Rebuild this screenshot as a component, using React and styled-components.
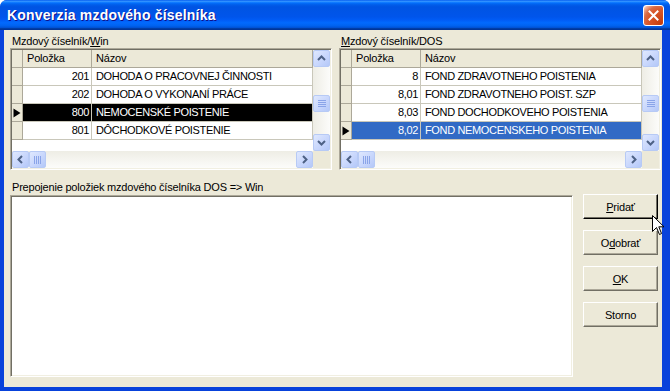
import React from 'react';
import styled, { createGlobalStyle } from 'styled-components';

const GlobalStyle = createGlobalStyle`
  html, body {
    margin: 0;
    padding: 0;
    background: #ffffff;
  }
  * {
    box-sizing: border-box;
  }
`;

const FONT = `"Liberation Sans", Arial, sans-serif`;

const Window = styled.div`
  position: relative;
  width: 670px;
  height: 391px;
  display: flex;
  flex-direction: column;
  background: #0842db;
  border-radius: 7px 7px 0 0;
  overflow: hidden;
  font-family: ${FONT};
  font-size: 11px;
  letter-spacing: -0.2px;
  color: #000;
`;

const TitleBar = styled.div`
  flex: none;
  height: 30px;
  display: flex;
  align-items: center;
  justify-content: space-between;
  padding: 0 6px 0 7px;
  background: linear-gradient(
    to bottom,
    #0058ee 0%,
    #3593ff 4%,
    #288eff 6%,
    #127dff 8%,
    #036ffc 10%,
    #0262ee 14%,
    #0057e5 20%,
    #0054e3 24%,
    #0055eb 56%,
    #005bf5 66%,
    #026afe 76%,
    #0062ef 86%,
    #0052d6 92%,
    #0040ab 94%,
    #003092 100%
  );
`;

const Title = styled.span`
  color: #fff;
  font-weight: 700;
  font-size: 14px;
  text-shadow: 1px 1px #0f1089;
  letter-spacing: 0.2px;
`;

const CloseButton = styled.div`
  width: 21px;
  height: 21px;
  border: 1px solid #fff;
  border-radius: 3px;
  background: radial-gradient(circle at 90% 90%, #c43d0c 0%, #d9572a 55%, #d86c47 72%, #f4b39c 90%, #fff 100%);
  display: flex;
  align-items: center;
  justify-content: center;
`;

const Client = styled.div`
  flex: 1;
  margin: 0 8px 4px 4px;
  background: #ece9d8;
  padding: 4px 1px 0 6px;
  display: flex;
  flex-direction: column;
`;

const TopRow = styled.div`
  display: grid;
  grid-template-columns: 322px 322px;
  column-gap: 7px;
`;

const Label = styled.div`
  height: 14px;
  line-height: 14px;
  padding-left: 2px;
  white-space: nowrap;
`;

const Grid = styled.div`
  height: 122px;
  border: 1px solid;
  border-color: #aca899 #fff #fff #aca899;
  box-shadow: inset 1px 1px #716f64, inset -1px -1px #f1efe2;
  padding: 1px;
  background: #fff;
  display: grid;
  grid-template-columns: 1fr 17px;
  grid-template-rows: 1fr 17px;
`;

const Table = styled.div`
  overflow: hidden;
`;

const Row = styled.div`
  display: grid;
  grid-template-columns: 11px 69px 1fr;
  height: 18px;
`;

const Cell = styled.div`
  border-right: 1px solid ${p => (p.$head ? '#aca899' : '#c9c7ba')};
  border-bottom: 1px solid ${p => (p.$head ? '#aca899' : '#c9c7ba')};
  background: ${p => (p.$head ? '#ece9d8' : p.$sel || '#fff')};
  color: ${p => (p.$sel ? '#fff' : '#000')};
  line-height: 17px;
  letter-spacing: ${p => (p.$head ? '-0.2px' : '-0.35px')};
  padding: 0 ${p => (p.$num ? '2px' : '3px')} 0 ${p => (p.$num ? '0' : '4px')};
  text-align: ${p => (p.$num ? 'right' : 'left')};
  white-space: nowrap;
  overflow: hidden;
`;

const Indicator = styled.div`
  background: #ece9d8;
  border-right: 1px solid #aca899;
  border-bottom: 1px solid #aca899;
  display: flex;
  align-items: center;
  padding-left: 1px;
`;

const VScroll = styled.div`
  display: flex;
  flex-direction: column;
  background: linear-gradient(to right, #eeede5, #fcfcfa);
`;

const HScroll = styled.div`
  display: flex;
  background: linear-gradient(to bottom, #eeede5, #fcfcfa);
`;

const Track = styled.div`
  flex: 1;
  display: flex;
  flex-direction: ${p => (p.$horizontal ? 'row' : 'column')};
`;

const ScrollBtn = styled.div`
  flex: none;
  width: 17px;
  height: 17px;
  border: 1px solid #b7caf5;
  border-radius: 2px;
  background: linear-gradient(135deg, #dfe8fe 0%, #c6d5fc 60%, #b4c8f8 100%);
  display: flex;
  align-items: center;
  justify-content: center;
`;

const Thumb = styled(ScrollBtn)`
  margin-top: ${p => p.$offset || 0}px;
`;

const Corner = styled.div`
  background: #ece9d8;
`;

const Bottom = styled.div`
  margin-top: 10px;
  display: flex;
  flex-direction: column;
`;

const BottomRow = styled.div`
  display: flex;
  align-items: flex-start;
`;

const Memo = styled.div`
  width: 563px;
  height: 182px;
  margin-top: 1px;
  background: #fff;
  border: 1px solid;
  border-color: #aca899 #fff #fff #aca899;
  box-shadow: inset 1px 1px #716f64, inset -1px -1px #f1efe2;
`;

const ButtonColumn = styled.div`
  margin-left: 10px;
  display: flex;
  flex-direction: column;
  gap: 11px;
`;

const Button = styled.button`
  width: 75px;
  height: 25px;
  padding: 0;
  font-family: ${FONT};
  font-size: 11px;
  letter-spacing: -0.2px;
  color: #000;
  background: #ece9d8;
  border: 1px solid;
  border-color: ${p => (p.$default ? '#fff #000 #000 #fff' : '#fff #716f64 #716f64 #fff')};
  box-shadow: inset -1px -1px ${p => (p.$default ? '#716f64' : '#aca899')};
`;

const Cursor = styled.svg`
  position: absolute;
  left: 652px;
  top: 215px;
`;

const Arrow = ({ dir }) => {
  const paths = {
    up: 'M5 10 L8.5 6.5 L12 10',
    down: 'M5 7 L8.5 10.5 L12 7',
    left: 'M10 5 L6.5 8.5 L10 12',
    right: 'M7 5 L10.5 8.5 L7 12',
  };
  return (
    <svg width="15" height="15" viewBox="1 1 15 15">
      <path d={paths[dir]} fill="none" stroke="#4d6185" strokeWidth="2" />
    </svg>
  );
};

const Grip = ({ horizontal }) => (
  <svg width="8" height="8" viewBox="0 0 8 8">
    {[0, 2, 4, 6].map(i =>
      horizontal ? (
        <line key={i} x1={i + 0.5} y1="0" x2={i + 0.5} y2="8" stroke="#8aa4e8" />
      ) : (
        <line key={i} x1="0" y1={i + 0.5} x2="8" y2={i + 0.5} stroke="#8aa4e8" />
      )
    )}
  </svg>
);

const Pointer = () => (
  <svg width="8" height="10" viewBox="0 0 8 10">
    <path d="M0.5 0.5 L7.5 5 L0.5 9.5 Z" fill="#000" />
  </svg>
);

const DataGrid = ({ rows, selectedColor }) => (
  <Grid>
    <Table>
      <Row>
        <Indicator />
        <Cell $head>Položka</Cell>
        <Cell $head>Názov</Cell>
      </Row>
      {rows.map(r => (
        <Row key={r.code}>
          <Indicator>{r.selected && <Pointer />}</Indicator>
          <Cell $num $sel={r.selected ? selectedColor : undefined}>{r.code}</Cell>
          <Cell $sel={r.selected ? selectedColor : undefined}>{r.name}</Cell>
        </Row>
      ))}
    </Table>
    <VScroll>
      <ScrollBtn><Arrow dir="up" /></ScrollBtn>
      <Track>
        <Thumb $offset={28}><Grip /></Thumb>
      </Track>
      <ScrollBtn><Arrow dir="down" /></ScrollBtn>
    </VScroll>
    <HScroll>
      <ScrollBtn><Arrow dir="left" /></ScrollBtn>
      <Track $horizontal>
        <Thumb><Grip horizontal /></Thumb>
      </Track>
      <ScrollBtn><Arrow dir="right" /></ScrollBtn>
    </HScroll>
    <Corner />
  </Grid>
);

const winRows = [
  { code: '201', name: 'DOHODA O PRACOVNEJ ČINNOSTI' },
  { code: '202', name: 'DOHODA O VYKONANÍ PRÁCE' },
  { code: '800', name: 'NEMOCENSKÉ POISTENIE', selected: true },
  { code: '801', name: 'DÔCHODKOVÉ POISTENIE' },
];

const dosRows = [
  { code: '8', name: 'FOND ZDRAVOTNEHO POISTENIA' },
  { code: '8,01', name: 'FOND ZDRAVOTNEHO POIST. SZP' },
  { code: '8,03', name: 'FOND DOCHODKOVEHO POISTENIA' },
  { code: '8,02', name: 'FOND NEMOCENSKEHO POISTENIA', selected: true },
];

const App = () => (
  <>
    <GlobalStyle />
    <Window>
      <TitleBar>
        <Title>Konverzia mzdového číselníka</Title>
        <CloseButton>
          <svg width="11" height="11" viewBox="0 0 11 11">
            <path d="M1.5 1.5 L9.5 9.5 M9.5 1.5 L1.5 9.5" stroke="#fff" strokeWidth="2" strokeLinecap="square" />
          </svg>
        </CloseButton>
      </TitleBar>
      <Client>
        <TopRow>
          <div>
            <Label>Mzdový číselník/<u>W</u>in</Label>
            <DataGrid rows={winRows} selectedColor="#000" />
          </div>
          <div>
            <Label><u>M</u>zdový číselník/DOS</Label>
            <DataGrid rows={dosRows} selectedColor="#316ac5" />
          </div>
        </TopRow>
        <Bottom>
          <Label>Prepojenie položiek mzdového číselníka DOS =&gt; Win</Label>
          <BottomRow>
            <Memo />
            <ButtonColumn>
              <Button $default><u>P</u>ridať</Button>
              <Button>O<u>d</u>obrať</Button>
              <Button><u>O</u>K</Button>
              <Button>Storno</Button>
            </ButtonColumn>
          </BottomRow>
        </Bottom>
      </Client>
      <Cursor width="13" height="21" viewBox="0 0 13 21">
        <path d="M0.5 0.5 L0.5 16.5 L4.5 12.5 L7.5 19.5 L9.5 18.5 L6.8 11.8 L12 11.8 Z" fill="#fff" stroke="#000" strokeWidth="1" />
      </Cursor>
    </Window>
  </>
);

export default App;
